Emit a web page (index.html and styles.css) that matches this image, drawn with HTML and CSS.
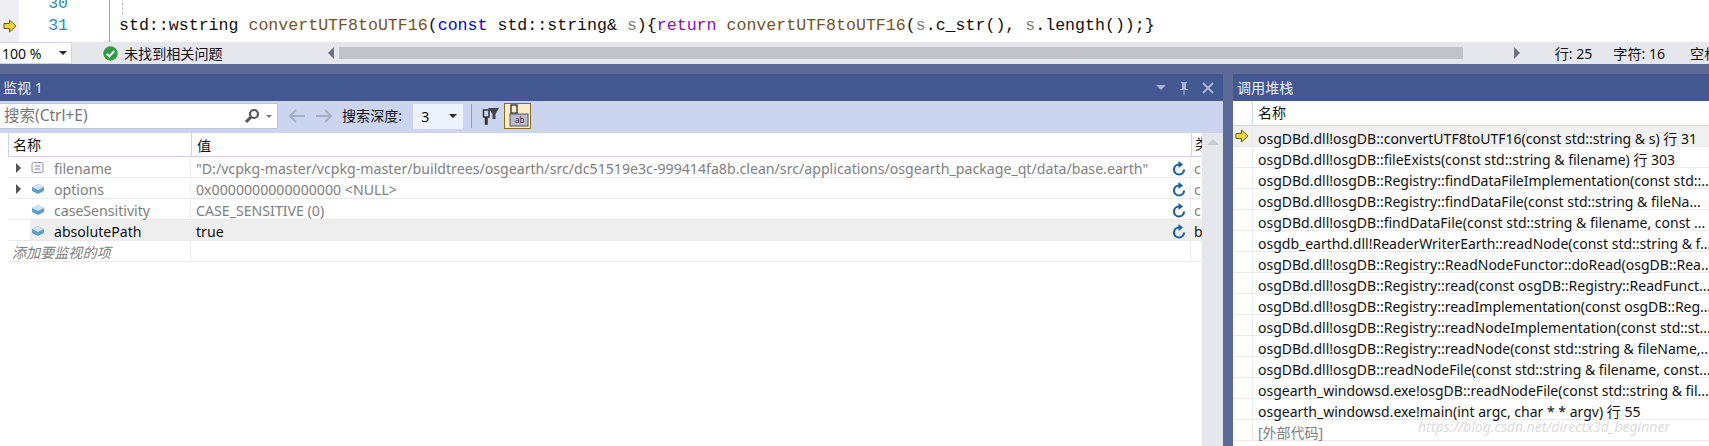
FILE: index.html
```html
<!DOCTYPE html>
<html lang="zh">
<head>
<meta charset="utf-8">
<title>Watch</title>
<link rel="stylesheet" href="styles.css">
</head>
<body>
<section class="editor">
  <div class="gutter">
    <svg class="cur-arrow" width="14" height="14" viewBox="0 0 14 14"><path d="M1 4.500H6.500V1L13 7L6.500 13V9.500H1Z" fill="#f5d33a" stroke="#6b5a20" stroke-width="1"/></svg>
  </div>
  <div class="lines">
    <div class="ln">30</div>
    <div class="ln">31</div>
  </div>
  <div class="src">
    <div class="src-line"><span class="guide"></span></div>
    <div class="src-line"><span class="tx">std::wstring </span><span class="fn">convertUTF8toUTF16</span><span class="tx">(</span><span class="kw">const</span><span class="tx"> std::string&amp; </span><span class="pm">s</span><span class="tx">){</span><span class="rt">return</span><span class="tx"> </span><span class="fn">convertUTF8toUTF16</span><span class="tx">(</span><span class="pm">s</span><span class="tx">.c_str(), </span><span class="pm">s</span><span class="tx">.length());}</span></div>
  </div>
</section>

<section class="status">
  <div class="zoom-box"><span>100 %</span><i class="caret"></i></div>
  <svg class="ok" width="15" height="15" viewBox="0 0 15 15"><circle cx="7.500" cy="7.500" r="7.200" fill="#2f9b45"/><path d="M3.800 7.800L6.400 10.300L11.200 5" fill="none" stroke="#fff" stroke-width="2"/></svg>
  <span class="ok-text">未找到相关问题</span>
  <i class="tri-l"></i>
  <div class="hscroll"></div>
  <i class="tri-r"></i>
  <span class="st st-line">行: 25</span>
  <span class="st st-char">字符: 16</span>
  <span class="st st-space">空格</span>
</section>

<div class="band"></div>

<main class="panels">
  <section class="watch">
    <header class="title">
      <span class="title-text">监视 1</span>
      <span class="title-tools">
        <i class="caret caret-light"></i>
        <svg width="12" height="14" viewBox="0 0 12 14"><path d="M3 1H9V2H8V8H10V9H6.500V14H5.500V9H2V8H4V2H3Z" fill="#a9b4d4"/></svg>
        <svg width="12" height="12" viewBox="0 0 12 12"><path d="M1 1L11 11M11 1L1 11" stroke="#a9b4d4" stroke-width="2"/></svg>
      </span>
    </header>
    <div class="toolbar">
      <div class="search">
        <span class="search-ph">搜索(Ctrl+E)</span>
        <svg class="mag" width="16" height="16" viewBox="0 0 16 16"><circle cx="10" cy="6" r="4" fill="none" stroke="#555" stroke-width="2.200"/><path d="M7 9L2 14" stroke="#555" stroke-width="3"/></svg>
        <i class="caret caret-grey"></i>
      </div>
      <svg class="nav" width="18" height="16" viewBox="0 0 18 16"><path d="M17 8H2M8 2L2 8L8 14" fill="none" stroke="#a7aec4" stroke-width="2"/></svg>
      <svg class="nav nav2" width="18" height="16" viewBox="0 0 18 16"><path d="M1 8H16M10 2L16 8L10 14" fill="none" stroke="#a7aec4" stroke-width="2"/></svg>
      <span class="depth-label">搜索深度:</span>
      <div class="depth"><span>3</span><i class="caret"></i></div>
      <span class="tb-sep"></span>
      <svg class="filter" width="17" height="19" viewBox="0 0 17 19"><path d="M1.500 3H7V10H5V17H3.500V10H1.500Z" fill="none" stroke="#333" stroke-width="1.500"/><path d="M6 1H17L13.500 7V12H10.500V7Z" fill="#444"/></svg>
      <button class="tb-active" type="button">
        <svg width="22" height="24" viewBox="0 0 22 24"><path d="M4 1H10V9H8V18H6V9H4Z" fill="none" stroke="#444" stroke-width="1.500"/><rect x="3" y="10" width="18" height="12" fill="#b9bcc9" stroke="#555"/><text class="ab" x="8" y="19">ab</text></svg>
      </button>
    </div>
    <div class="watch-body">
      <div class="table">
        <div class="w-head">
          <div class="c-name">名称</div>
          <div class="c-val">值</div>
          <div class="c-type">类型</div>
        </div>
        <div class="w-row">
          <div class="c-name dim"><i class="exp"></i>
            <svg class="ric" width="14" height="14" viewBox="0 0 14 14"><rect x="1" y="1.500" width="11" height="10" rx="1.500" fill="#f4f4f4" stroke="#999"/><path d="M4 5H9M4 8H9" stroke="#7a8fb0"/></svg>
            <span>filename</span></div>
          <div class="c-val dim"><span class="val-text">"D:/vcpkg-master/vcpkg-master/buildtrees/osgearth/src/dc51519e3c-999414fa8b.clean/src/applications/osgearth_package_qt/data/base.earth"</span>
            <svg class="refresh" width="14" height="15" viewBox="0 0 14 15"><path d="M7 3.500A5 5 0 1 0 12 8.500" fill="none" stroke="#1c5ea6" stroke-width="2.200"/><path d="M6.500 0L11 3.500L6.500 7Z" fill="#1c5ea6"/></svg></div>
          <div class="c-type dim">c</div>
        </div>
        <div class="w-row">
          <div class="c-name dim"><i class="exp"></i>
            <svg class="ric" width="14" height="14" viewBox="0 0 14 14"><path d="M1 5L7 2L13 5V9L7 12L1 9Z" fill="#5f9ecb"/><path d="M1 5L7 8L13 5L7 2Z" fill="#cfe3f2"/></svg>
            <span>options</span></div>
          <div class="c-val dim"><span class="val-text">0x0000000000000000 &lt;NULL&gt;</span>
            <svg class="refresh" width="14" height="15" viewBox="0 0 14 15"><path d="M7 3.500A5 5 0 1 0 12 8.500" fill="none" stroke="#1c5ea6" stroke-width="2.200"/><path d="M6.500 0L11 3.500L6.500 7Z" fill="#1c5ea6"/></svg></div>
          <div class="c-type dim">c</div>
        </div>
        <div class="w-row">
          <div class="c-name dim"><i class="exp exp-none"></i>
            <svg class="ric" width="14" height="14" viewBox="0 0 14 14"><path d="M1 5L7 2L13 5V9L7 12L1 9Z" fill="#5f9ecb"/><path d="M1 5L7 8L13 5L7 2Z" fill="#cfe3f2"/></svg>
            <span>caseSensitivity</span></div>
          <div class="c-val dim"><span class="val-text">CASE_SENSITIVE (0)</span>
            <svg class="refresh" width="14" height="15" viewBox="0 0 14 15"><path d="M7 3.500A5 5 0 1 0 12 8.500" fill="none" stroke="#1c5ea6" stroke-width="2.200"/><path d="M6.500 0L11 3.500L6.500 7Z" fill="#1c5ea6"/></svg></div>
          <div class="c-type dim">c</div>
        </div>
        <div class="w-row sel">
          <div class="c-name"><i class="exp exp-none"></i>
            <svg class="ric" width="14" height="14" viewBox="0 0 14 14"><path d="M1 5L7 2L13 5V9L7 12L1 9Z" fill="#5f9ecb"/><path d="M1 5L7 8L13 5L7 2Z" fill="#cfe3f2"/></svg>
            <span>absolutePath</span></div>
          <div class="c-val"><span class="val-text">true</span>
            <svg class="refresh" width="14" height="15" viewBox="0 0 14 15"><path d="M7 3.500A5 5 0 1 0 12 8.500" fill="none" stroke="#1c5ea6" stroke-width="2.200"/><path d="M6.500 0L11 3.500L6.500 7Z" fill="#1c5ea6"/></svg></div>
          <div class="c-type">b</div>
        </div>
        <div class="w-row">
          <div class="c-name add">添加要监视的项</div>
          <div class="c-val"></div>
          <div class="c-type"></div>
        </div>
      </div>
      <div class="vscroll"><i class="tri-u"></i></div>
    </div>
  </section>

  <div class="splitter"></div>

  <section class="stack">
    <header class="title"><span class="title-text title-stack">调用堆栈</span></header>
    <div class="s-head"><div class="s-gut"></div><div class="s-name">名称</div></div>
    <div class="s-row cur"><div class="s-gut"><svg width="14" height="14" viewBox="0 0 14 14"><path d="M1 4.500H6.500V1L13 7L6.500 13V9.500H1Z" fill="#f5d33a" stroke="#6b5a20" stroke-width="1"/></svg></div><div class="s-name">osgDBd.dll!osgDB::convertUTF8toUTF16(const std::string &amp; s) 行 31</div></div>
    <div class="s-row"><div class="s-gut"></div><div class="s-name">osgDBd.dll!osgDB::fileExists(const std::string &amp; filename) 行 303</div></div>
    <div class="s-row"><div class="s-gut"></div><div class="s-name">osgDBd.dll!osgDB::Registry::findDataFileImplementation(const std::...</div></div>
    <div class="s-row"><div class="s-gut"></div><div class="s-name">osgDBd.dll!osgDB::Registry::findDataFile(const std::string &amp; fileNa...</div></div>
    <div class="s-row"><div class="s-gut"></div><div class="s-name">osgDBd.dll!osgDB::findDataFile(const std::string &amp; filename, const ...</div></div>
    <div class="s-row"><div class="s-gut"></div><div class="s-name">osgdb_earthd.dll!ReaderWriterEarth::readNode(const std::string &amp; f...</div></div>
    <div class="s-row"><div class="s-gut"></div><div class="s-name">osgDBd.dll!osgDB::Registry::ReadNodeFunctor::doRead(osgDB::Rea...</div></div>
    <div class="s-row"><div class="s-gut"></div><div class="s-name">osgDBd.dll!osgDB::Registry::read(const osgDB::Registry::ReadFunct...</div></div>
    <div class="s-row"><div class="s-gut"></div><div class="s-name">osgDBd.dll!osgDB::Registry::readImplementation(const osgDB::Reg...</div></div>
    <div class="s-row"><div class="s-gut"></div><div class="s-name">osgDBd.dll!osgDB::Registry::readNodeImplementation(const std::st...</div></div>
    <div class="s-row"><div class="s-gut"></div><div class="s-name">osgDBd.dll!osgDB::Registry::readNode(const std::string &amp; fileName,...</div></div>
    <div class="s-row"><div class="s-gut"></div><div class="s-name">osgDBd.dll!osgDB::readNodeFile(const std::string &amp; filename, const...</div></div>
    <div class="s-row"><div class="s-gut"></div><div class="s-name">osgearth_windowsd.exe!osgDB::readNodeFile(const std::string &amp; fil...</div></div>
    <div class="s-row"><div class="s-gut"></div><div class="s-name">osgearth_windowsd.exe!main(int argc, char * * argv) 行 55</div></div>
    <div class="s-row"><div class="s-gut"></div><div class="s-name ext">[外部代码]</div></div>
    <span class="mark">https://blog.csdn.net/directx3d_beginner</span>
  </section>
</main>
</body>
</html>
```

FILE: styles.css
```css
* { box-sizing: border-box; }
html, body { margin: 0; padding: 0; }
body {
  width: 1709px;
  height: 446px;
  overflow: hidden;
  background: #fff;
  color: #1e1e1e;
  font: 14.100px/21px "Noto Sans", "Noto Sans CJK SC", sans-serif;
}
i { display: block; flex: none; }
svg { flex: none; }

/* editor */
.editor { height: 42px; display: flex; overflow: hidden; background: #fff; }
.gutter { flex: none; width: 19px; background: #eeeef2; padding: 19px 0 0 3px; }
.cur-arrow { display: block; }
.lines {
  flex: none;
  width: 91px;
  height: 49px;
  margin-top: -7px;
  border-right: 1px solid #a0a0a0;
  padding-right: 41px;
  text-align: right;
  color: #2b91af;
  font: 16.500px/22px "Liberation Mono", monospace;
}
.ln { height: 22px; }
.src {
  flex: none;
  width: 1200px;
  height: 49px;
  margin: -7px 0 0 9px;
  font: 16.600px/22px "Liberation Mono", monospace;
}
.src-line { height: 22px; white-space: pre; }
.guide { display: block; width: 0; height: 22px; margin-left: 3px; border-left: 1px dashed #bbb; }
.tx { color: #111; }
.fn { color: #74531f; }
.kw { color: #0000ff; }
.rt { color: #8f08c4; }
.pm { color: #808080; }

/* status */
.status { height: 22px; background: #e6e7ed; display: flex; align-items: center; white-space: nowrap; overflow: hidden; }
.zoom-box {
  flex: none;
  width: 72px; height: 22px;
  background: #fff;
  border: 1px solid #ccd5f0;
  border-left: 0;
  display: flex; align-items: center; justify-content: space-between;
  padding: 0 4px 0 2px;
  color: #111;
}
.caret { width: 0; height: 0; border: 4px solid transparent; border-top-color: #222; border-bottom: 0; }
.caret-light { border-top-color: #a9b4d4; border-width: 5px; border-bottom: 0; }
.caret-grey { border-top-color: #777; margin-left: 6px; }
.ok { margin-left: 31px; }
.ok-text { flex: none; margin-left: 6px; color: #111; }
.tri-l { margin-left: 105px; width: 0; height: 0; border: 6px solid transparent; border-right-color: #6d7084; border-left: 0; }
.hscroll { flex: none; margin-left: 5px; width: 1124px; height: 12px; background: #c2c3c9; }
.tri-r { margin-left: 51px; width: 0; height: 0; border: 6px solid transparent; border-left-color: #6d7084; border-right: 0; }
.st { flex: none; color: #111; white-space: nowrap; }
.st-line { margin-left: 35px; }
.st-char { margin-left: 21px; }
.st-space { margin-left: 25px; }

.band { height: 10px; background: #5d6b99; }

/* panels */
.panels { display: flex; height: 372px; }
.watch { flex: none; width: 1223px; display: flex; flex-direction: column; }
.splitter { flex: none; width: 10px; background: #5d6b99; }
.stack { flex: none; width: 476px; position: relative; overflow: hidden; }
.title {
  height: 27px; background: #435790; color: #e8ecf6;
  display: flex; align-items: center; justify-content: space-between;
  padding: 0 9px 0 3px;
}
.title-stack { margin-left: 1px; }
.title-tools { display: flex; align-items: center; gap: 12px; }

/* toolbar */
.toolbar { height: 32px; background: #ccd5f0; display: flex; align-items: center; padding-bottom: 2px; }
.search {
  flex: none;
  width: 278px; height: 26px; background: #fff;
  border: 1px solid #bcc5dc; border-left: 0;
  display: flex; align-items: center; padding: 0 5px 0 4px;
}
.search-ph { flex: 1; color: #777; padding-bottom: 2px; font-size: 15.500px; }
.caret-grey { border-width: 3px; border-bottom: 0; }
.nav { margin-left: 10px; }
.nav2 { margin-left: 9px; }
.depth-label { flex: none; margin-left: 9px; color: #111; padding-bottom: 2px; }
.depth {
  flex: none;
  width: 50px; height: 25px; margin-left: 11px; background: #eef2fc;
  display: flex; align-items: center; justify-content: space-between;
  padding: 0 6px 0 8px;
  color: #111;
}
.tb-sep { flex: none; width: 1px; height: 24px; margin-left: 8px; background: #8e9bbc; }
.filter { margin-left: 10px; }
.tb-active {
  flex: none;
  margin: 0 0 0 5px; padding: 0; width: 27px; height: 26px;
  background: #fbeccb; border: 1px solid #8a6a20;
  display: flex; align-items: center; justify-content: center;
}
.ab { font: 8px "Noto Sans", sans-serif; fill: #333; }

/* watch table */
.watch-body { flex: 1; display: flex; min-height: 0; }
.table { flex: none; width: 1202px; }
.w-head { height: 24px; margin-left: 8px; display: flex; border-left: 1px solid #ccd5f0; border-bottom: 1px solid #ccd5f0; color: #111; white-space: nowrap; }
.w-row { height: 21px; margin-left: 8px; display: flex; border-bottom: 1px solid #eaeaea; white-space: nowrap; color: #111; }
.c-name { flex: none; width: 183px; display: flex; align-items: center; border-right: 1px solid #ececec; padding-left: 4px; }
.w-row .c-name, .w-row .c-val { padding-top: 2px; }
.w-head .c-name, .w-head .c-val { border-right: 1px solid #ccd5f0; }
.c-val { flex: none; width: 1000px; display: flex; align-items: center; justify-content: space-between; padding: 1px 4px 0 5px; border-right: 1px solid #ececec; }
.val-text { font-size: 14.170px; }
.c-type { flex: 1; overflow: hidden; padding-left: 3px; }
.w-row .c-type { padding-top: 1px; }
.dim { color: #808080; }
.sel { background: linear-gradient(to right, #fff 22px, #eeeeee 22px); }
.exp { width: 0; height: 0; margin-left: 4px; border: 5px solid transparent; border-left-color: #555; border-right: 0; }
.exp-none { border-left-color: transparent; }
.ric { margin-left: 10px; }
.c-name > span { margin-left: 9px; }
.add { color: #808080; font-style: italic; }

.vscroll { flex: none; width: 21px; background: #e6e7ed; padding: 6px 0 0 5px; }
.tri-u { width: 0; height: 0; border: 6px solid transparent; border-bottom-color: #c9cbd4; border-top: 0; }

/* call stack */
.s-head { height: 25px; display: flex; border-bottom: 1px solid #ccd5f0; color: #111; }
.s-row { height: 21px; display: flex; border-bottom: 1px solid #eaeaea; white-space: nowrap; color: #111; font-size: 14px; }
.s-gut { flex: none; width: 20px; border-right: 1px solid #ececec; padding: 3px 0 0 2px; }
.s-head .s-gut { border-right-color: #ccd5f0; }
.s-name { flex: none; padding: 1px 0 0 5px; }
.s-row .s-name { padding-top: 2px; }
.cur { background: #f0f0f0; }
.s-gut svg { display: block; }
.ext { color: #808080; }
.mark {
  position: absolute; left: 185px; top: 342px;
  color: #dcdcdc; font-size: 14px; font-style: italic; white-space: nowrap;
}
```
